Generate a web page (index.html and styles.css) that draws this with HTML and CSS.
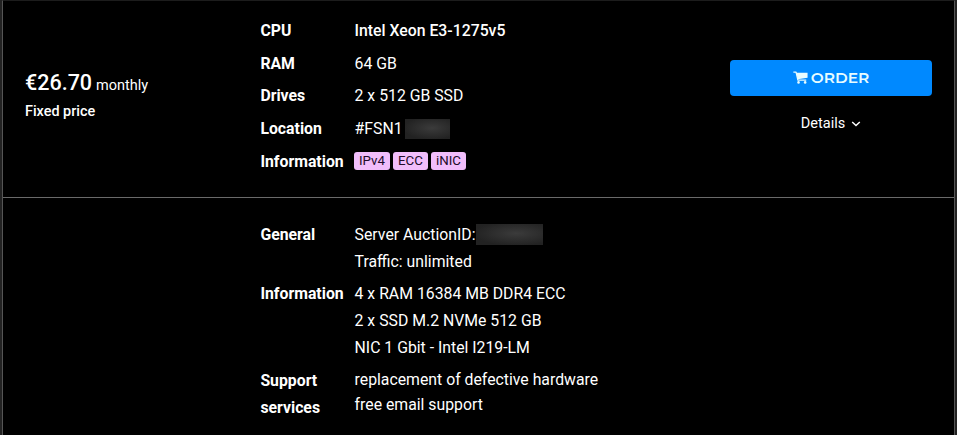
FILE: index.html
```
<!DOCTYPE html>
<html lang="en">
<head>
    <meta charset="UTF-8">
    <meta name="viewport" content="width=device-width, initial-scale=1.0">
    <title>Server Auction</title>
    <link rel="stylesheet" href="styles.css">
</head>
<body>
    <div class="server-card">
        <!-- Summary row -->
        <div class="summary">
            <div class="price-box">
                <div class="price"><strong>€26.70</strong> <span>monthly</span></div>
                <div class="price-type">Fixed price</div>
            </div>

            <dl class="specs">
                <dt>CPU</dt>
                <dd class="cpu">Intel Xeon E3-1275v5</dd>
                <dt>RAM</dt>
                <dd>64 GB</dd>
                <dt>Drives</dt>
                <dd>2 x 512 GB SSD</dd>
                <dt>Location</dt>
                <dd class="masked">#FSN1<span class="mask mask-location"></span></dd>
                <dt>Information</dt>
                <dd class="badges">
                    <span class="badge badge-ipv4">IPv4</span>
                    <span class="badge badge-ecc">ECC</span>
                    <span class="badge badge-inic">iNIC</span>
                </dd>
            </dl>

            <div class="actions">
                <button class="order-button" type="button">
                    <svg class="cart-icon" viewBox="0 0 16 14" width="15" height="13">
                        <path d="M0.3 1.3h2.9l2 8.6h9" fill="none" stroke="currentColor" stroke-width="1.4" stroke-linejoin="round"/>
                        <path d="M3.6 1.8h12v5.6L5 8.8z" fill="currentColor"/>
                        <circle cx="5.9" cy="12.3" r="1.4" fill="currentColor"/>
                        <circle cx="13" cy="12.3" r="1.4" fill="currentColor"/>
                    </svg>
                    <span>ORDER</span>
                </button>
                <a class="details-link">
                    Details
                    <svg viewBox="0 0 10 6" width="10" height="6">
                        <path d="M1.2 0.9l3.8 3.7L8.8 0.9" fill="none" stroke="currentColor" stroke-width="1.4"/>
                    </svg>
                </a>
            </div>
        </div>

        <!-- Expanded details -->
        <dl class="specs details">
            <dt>General</dt>
            <dd>
                <div class="masked">Server AuctionID:<span class="mask mask-id"></span></div>
                <div>Traffic: unlimited</div>
            </dd>
            <dt>Information</dt>
            <dd>
                <div>4 x RAM 16384 MB DDR4 ECC</div>
                <div>2 x SSD M.2 NVMe 512 GB</div>
                <div>NIC 1 Gbit - Intel I219-LM</div>
            </dd>
            <dt>Support services</dt>
            <dd class="support">
                <div>replacement of defective hardware</div>
                <div>free email support</div>
            </dd>
        </dl>
    </div>
</body>
</html>
```
FILE: styles.css
```
* {
    margin: 0;
    padding: 0;
    box-sizing: border-box;
}

body {
    height: 435px;
    padding: 0 2px;
    background-color: #222;
    color: #fff;
    font-family: Roboto, sans-serif;
    font-size: 15.8px;
    line-height: 27px;
    overflow: hidden;
}

.server-card {
    height: 435px;
    background-color: #000;
    border-top: 1px solid #1c1c1c;
    border-left: 1px solid #555;
    border-right: 1px solid #555;
}

/* Summary row */
.summary {
    display: flex;
    height: 197px;
    padding-left: 22px;
    border-bottom: 1px solid #6a6a6a;
}

.price-box {
    width: 235.4px;
    padding-top: 68px;
}

.price {
    line-height: 27px;
}

.price strong {
    font-size: 21.5px;
    font-weight: 500;
}

.price span {
    font-size: 14.5px;
}

.price-type {
    font-size: 14.4px;
    font-weight: 500;
    line-height: 25px;
}

/* Label / value lists */
.specs {
    display: grid;
    grid-template-columns: 94.2px 1fr;
    row-gap: 5.7px;
    align-content: start;
    width: 469.6px;
    padding-top: 16px;
}

.specs dt {
    font-weight: 700;
}

.specs .cpu {
    font-weight: 500;
}

.details {
    margin-left: 257.4px;
    padding-top: 23px;
    row-gap: 5.4px;
}

.details .support div {
    line-height: 25px;
}

.masked,
.badges {
    display: flex;
    align-items: center;
}

/* Hidden values */
.mask {
    background: radial-gradient(ellipse at 60% 45%, #3b3b3b, #222 75%);
}

.mask-location {
    width: 45px;
    height: 20px;
    margin-left: 2px;
}

.mask-id {
    width: 67px;
    height: 21px;
    margin-left: 1px;
}

.badges {
    gap: 3px;
    margin-left: -0.6px;
}

.badge {
    height: 18px;
    border-radius: 3px;
    background-color: #f1bdfb;
    color: #210b2a;
    font-size: 13.3px;
    line-height: 17px;
    text-align: center;
}

.badge-ipv4 {
    width: 36px;
}

.badge-ecc,
.badge-inic {
    width: 35px;
}

/* Order button and details toggle */
.actions {
    display: flex;
    flex-direction: column;
    align-items: center;
    width: 202px;
    padding-top: 59px;
}

.order-button {
    display: flex;
    align-items: center;
    justify-content: center;
    gap: 3px;
    width: 202px;
    height: 36px;
    padding-bottom: 1px;
    border: 0;
    border-radius: 4px;
    background-color: #0089ff;
    color: #e8fcff;
    font-family: Montserrat, Lato, sans-serif;
    font-size: 15.4px;
    font-weight: 600;
}

.details-link {
    display: flex;
    align-items: center;
    gap: 6px;
    margin-top: 14px;
    font-size: 14.5px;
}
```
